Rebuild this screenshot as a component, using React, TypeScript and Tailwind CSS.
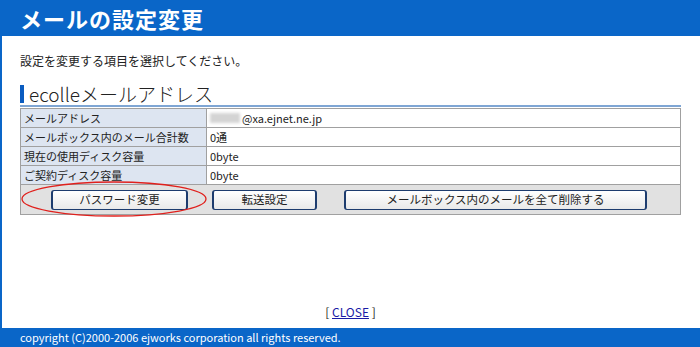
import React from "react";

const jp = { fontFamily: '"Noto Sans CJK JP", "Noto Sans", sans-serif' };

function Btn({ children, className }: { children: React.ReactNode; className: string }) {
  return (
    <div
      className={
        "h-[20px] flex items-center justify-center rounded-[3px] border border-[#1d3c6e] border-l-[2px] border-r-[2px] bg-gradient-to-b from-[#ffffff] to-[#e9e9e9] text-[11.5px] text-[#222] " +
        className
      }
    >
      {children}
    </div>
  );
}

export default function App() {
  const rows: [string, React.ReactNode][] = [
    [
      "メールアドレス",
      <span className="flex items-center">
        <span className="inline-block w-[30px] h-[10px] bg-[#d4d4d4] blur-[1.5px] mr-[2px]" />
        <span>@xa.ejnet.ne.jp</span>
      </span>,
    ],
    ["メールボックス内のメール合計数", "0通"],
    ["現在の使用ディスク容量", "0byte"],
    ["ご契約ディスク容量", "0byte"],
  ];
  return (
    <div className="w-[700px] h-[347px] flex flex-col bg-white overflow-hidden" style={jp}>
      <div className="h-[36px] bg-[#0a66c8] flex items-center pl-[20px]">
        <span className="text-white font-bold text-[22px] leading-none tracking-[1px]">メールの設定変更</span>
      </div>
      <div className="flex-1 border-l-2 border-[#0a66c8] pl-[18px] pr-[19px] flex flex-col">
        <p className="mt-[17px] text-[12px] leading-[16px] text-[#222]">設定を変更する項目を選択してください。</p>
        <div className="mt-[15px] flex items-center border-b-2 border-[#7fa6d4] pb-[1px]">
          <div className="w-[4px] h-[18px] bg-[#0a5cc0] mr-[5px]" />
          <span className="text-[19px] leading-[20px] text-[#222] font-light">ecolleメールアドレス</span>
        </div>
        <div className="relative mt-[1px]">
          <div className="border border-[#a0a0a0]">
            {rows.map(([k, v], i) => (
              <div key={i} className="flex h-[19px] border-b border-[#a0a0a0] text-[11px] text-[#222]">
                <div className="w-[186px] bg-[#dde5f1] border-r border-[#a0a0a0] pl-[3px] flex items-center">{k}</div>
                <div className="flex-1 pl-[3px] flex items-center">{v}</div>
              </div>
            ))}
            <div className="h-[29px] bg-[#e1e1e1] flex items-center">
              <Btn className="ml-[30px] w-[137px]">パスワード変更</Btn>
              <Btn className="ml-[24px] w-[105px]">転送設定</Btn>
              <Btn className="ml-[27px] w-[303px]">メールボックス内のメールを全て削除する</Btn>
            </div>
          </div>
          <svg className="absolute left-[0px] top-[72px]" width="190" height="38" viewBox="0 0 190 38">
            <ellipse cx="94" cy="19" rx="92" ry="17" fill="none" stroke="#e0201c" strokeWidth="1.3" />
          </svg>
        </div>
        <div className="flex-1" />
        <div className="text-center text-[12px] text-[#222] mb-[7px]">
          [ <span className="text-[#1a1aa6] underline">CLOSE</span> ]
        </div>
      </div>
      <div className="h-[19px] bg-[#0a66c8] flex items-center pl-[20px]">
        <span className="text-white text-[11px]">copyright (C)2000-2006 ejworks corporation all rights reserved.</span>
      </div>
    </div>
  );
}
